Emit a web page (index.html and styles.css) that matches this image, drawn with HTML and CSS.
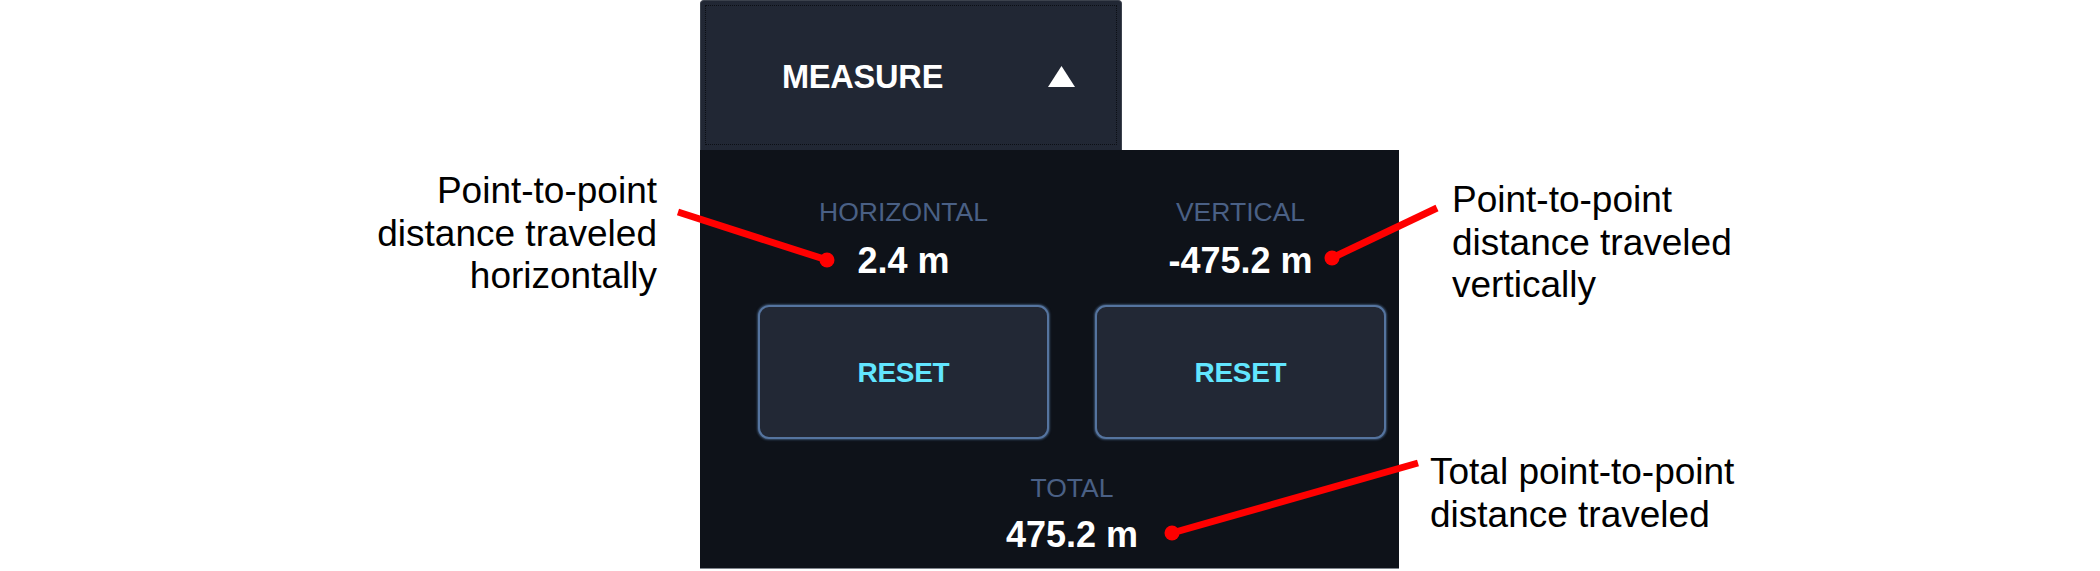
FILE: index.html
```html
<!DOCTYPE html>
<html lang="en">
<head>
<meta charset="utf-8">
<title>Measure panel</title>
<link rel="stylesheet" href="styles.css">
</head>
<body>
<div class="stage">
  <div class="widget">
    <div class="tab">
      <span class="tab-title">MEASURE</span>
      <svg class="tab-caret" width="27" height="21" viewBox="0 0 27 21"><polygon points="13.5,0 27,21 0,21" fill="#ffffff"/></svg>
    </div>
    <div class="panel">
      <div class="cols">
        <div class="col">
          <div class="label">HORIZONTAL</div>
          <div class="value">2.4 m</div>
          <button class="reset">RESET</button>
        </div>
        <div class="col">
          <div class="label">VERTICAL</div>
          <div class="value">-475.2 m</div>
          <button class="reset">RESET</button>
        </div>
      </div>
      <div class="total">
        <div class="label">TOTAL</div>
        <div class="value value-total">475.2 m</div>
      </div>
    </div>
  </div>

  <div class="note note-left">Point-to-point<br>distance traveled<br>horizontally</div>
  <div class="note note-right">Point-to-point<br>distance traveled<br>vertically</div>
  <div class="note note-bottom">Total point-to-point<br>distance traveled</div>

  <svg class="leaders" width="2100" height="571" viewBox="0 0 2100 571">
    <g stroke="#ff0000" stroke-width="7" stroke-linecap="butt" fill="#ff0000">
      <line x1="678" y1="212" x2="827" y2="260"/>
      <line x1="1437" y1="208" x2="1332" y2="258"/>
      <line x1="1418" y1="463" x2="1172" y2="533"/>
    </g>
    <g fill="#ff0000">
      <circle cx="827" cy="260" r="7.5"/>
      <circle cx="1332" cy="258" r="7.5"/>
      <circle cx="1172" cy="533" r="7.5"/>
    </g>
  </svg>
</div>
</body>
</html>
```

FILE: styles.css
```css
html, body {
  margin: 0;
  padding: 0;
  background: #ffffff;
}

.stage {
  position: relative;
  width: 2100px;
  height: 571px;
  overflow: hidden;
  font-family: "Liberation Sans", Arial, sans-serif;
}

.widget {
  margin-left: 700px;
  width: 699px;
  display: flex;
  flex-direction: column;
  align-items: flex-start;
}

.tab {
  box-sizing: border-box;
  width: 422px;
  height: 150px;
  background: #212734;
  border: 1px solid #3c424d;
  border-bottom: none;
  border-radius: 4px 4px 0 0;
  outline: 1px dotted #0c0f15;
  outline-offset: -6px;
  display: flex;
  align-items: center;
  padding-left: 81px;
  padding-top: 2px;
}

.tab-title {
  color: #ffffff;
  font-weight: bold;
  font-size: 32.5px;
  letter-spacing: -0.2px;
  line-height: 40px;
}

.tab-caret {
  margin-left: 105px;
  margin-top: 0;
}

.panel {
  box-sizing: border-box;
  width: 699px;
  height: 419px;
  background: #0e1219;
  border-bottom: 1px solid #80858d;
  padding: 47px 13px 0 58px;
  display: flex;
  flex-direction: column;
}

.cols {
  display: grid;
  grid-template-columns: 291px 291px;
  column-gap: 46px;
}

.col {
  display: flex;
  flex-direction: column;
  align-items: center;
}

.label {
  color: #4a6085;
  font-size: 26.5px;
  line-height: 30px;
  white-space: nowrap;
}

.value {
  color: #ffffff;
  font-weight: bold;
  font-size: 36px;
  line-height: 40px;
  margin-top: 14px;
  white-space: nowrap;
}

.reset {
  margin-top: 24px;
  width: 291px;
  height: 134px;
  box-sizing: border-box;
  background: #222835;
  border: 2px solid #55749f;
  border-radius: 11px;
  box-shadow: 0 0 2px 1px rgba(95, 135, 185, 0.5);
  color: #62e6ff;
  font-family: "Liberation Sans", Arial, sans-serif;
  font-weight: bold;
  font-size: 28px;
  letter-spacing: -0.3px;
  padding: 0;
  padding-top: 2px;
}

.total {
  margin-top: 34px;
  display: flex;
  flex-direction: column;
  align-items: center;
}

.value-total {
  margin-top: 12px;
}

.note {
  position: absolute;
  color: #000000;
  font-size: 37px;
  line-height: 42.5px;
  white-space: nowrap;
}

.note-left {
  left: 357px;
  top: 170px;
  width: 300px;
  text-align: right;
}

.note-right {
  left: 1452px;
  top: 179px;
}

.note-bottom {
  left: 1430px;
  top: 451px;
}

.leaders {
  position: absolute;
  left: 0;
  top: 0;
  pointer-events: none;
}
```
